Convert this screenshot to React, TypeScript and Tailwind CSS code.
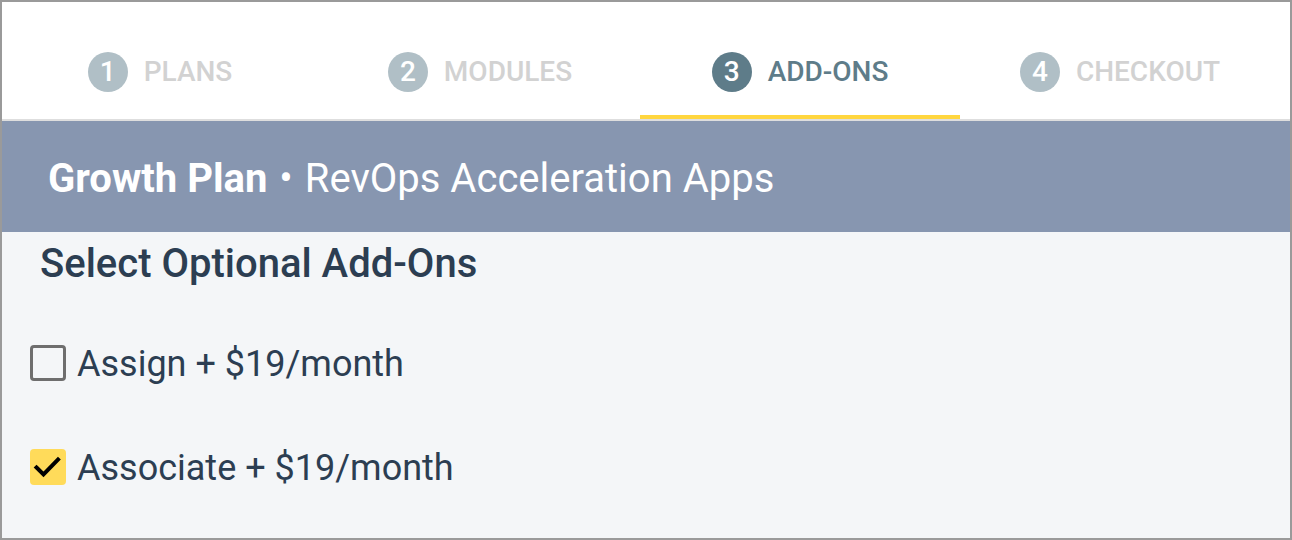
import React from "react";

const tabs = [
  { n: "1", label: "PLANS", active: false },
  { n: "2", label: "MODULES", active: false },
  { n: "3", label: "ADD-ONS", active: true },
  { n: "4", label: "CHECKOUT", active: false },
];

function Check({ checked }: { checked: boolean }) {
  if (checked) {
    return (
      <div className="w-[36px] h-[36px] rounded-[4px] bg-[#ffdb5a] flex items-center justify-center shrink-0">
        <svg width="36" height="36" viewBox="0 0 36 36">
          <path d="M6.5 18.5 L13.5 25.5 L28 10.5" fill="none" stroke="#000" strokeWidth="4" strokeLinecap="square" strokeLinejoin="miter" />
        </svg>
      </div>
    );
  }
  return <div className="w-[36px] h-[36px] rounded-[4px] border-[3px] border-[#6e6e6e] shrink-0" />;
}

export default function App() {
  return (
    <div
      className="relative w-[1292px] h-[540px] bg-[#f4f6f8] overflow-hidden"
      style={{ fontFamily: "Roboto, 'Noto Sans', sans-serif" }}
    >
      <div className="bg-white">
        <div className="grid grid-cols-4 w-[1280px] h-[119px]">
          {tabs.map((t) => (
            <div key={t.n} className="flex flex-col">
              <div className="flex-1 flex items-center justify-center gap-[16px] pt-[29px]">
                <div
                  className={
                    "w-[40px] h-[40px] rounded-full flex items-center justify-center text-white text-[28px] font-medium leading-none " +
                    (t.active ? "bg-[#5e7c89]" : "bg-[#b0bfc6]")
                  }
                >
                  {t.n}
                </div>
                <span
                  className={
                    "text-[28px] font-medium leading-none " +
                    (t.active ? "text-[#5e7c89]" : "text-[#d2d2d2]")
                  }
                >
                  {t.label}
                </span>
              </div>
              <div className={"h-[4px] " + (t.active ? "bg-[#ffd63f]" : "bg-transparent")} />
            </div>
          ))}
        </div>
      </div>
      <div className="h-[2px] bg-[#dedede]" />
      <div className="h-[111px] bg-[#8796b0] flex items-center pl-[48px] pt-[4px] text-white text-[40px] leading-none">
        <span className="font-bold">Growth Plan</span>
        <span className="ml-[12px]">•</span>
        <span className="ml-[12px]">RevOps Acceleration Apps</span>
      </div>
      <div className="pt-[12px]">
        <div className="pl-[40px] h-[40px] flex items-center text-[40px] font-medium text-[#2c3e52]">
          Select Optional Add-Ons
        </div>
        <div className="mt-[55px] pl-[30px] flex flex-col gap-[56px]">
          <div className="h-[48px] flex items-center gap-[11px]">
            <Check checked={false} />
            <span className="text-[36px] text-[#2c3e52] leading-none pt-[2px]">Assign + $19/month</span>
          </div>
          <div className="h-[48px] flex items-center gap-[11px]">
            <Check checked={true} />
            <span className="text-[36px] text-[#2c3e52] leading-none pt-[2px]">Associate + $19/month</span>
          </div>
        </div>
      </div>
      <div className="absolute inset-0 border-2 border-[#9a9a9a] pointer-events-none" />
    </div>
  );
}
